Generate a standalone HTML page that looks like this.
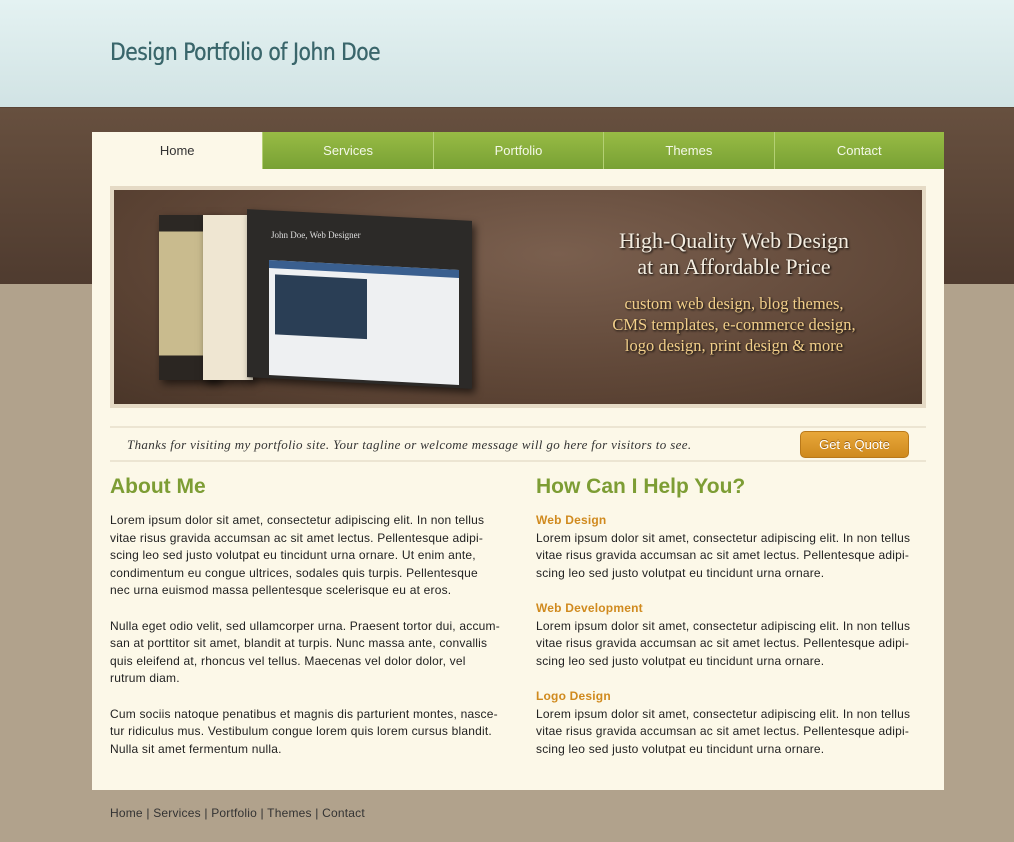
<!DOCTYPE html>
<html><head><meta charset="utf-8"><style>
*{margin:0;padding:0;box-sizing:border-box}
body{width:1014px;height:842px;position:relative;overflow:hidden;font-family:"Liberation Sans",sans-serif;background:#b1a28c}
#hdr{position:absolute;left:0;top:0;width:1014px;height:107px;background:linear-gradient(#e4f2f2,#d1e3e4)}
#hdr h1{position:absolute;left:110px;top:38px;font-family:"DejaVu Sans Condensed","Liberation Sans Narrow",sans-serif;font-weight:normal;font-size:24px;color:#3a666b;letter-spacing:-0.4px;transform:scaleX(0.93);transform-origin:left;text-shadow:0.4px 0 0 #3a666b}
#band{position:absolute;left:0;top:107px;width:1014px;height:177px;background:linear-gradient(#67503f,#4f3b2f);border-top:1px solid #5a4536}
#box{position:absolute;left:92px;top:132px;width:852px;height:658px;background:#fcf8e8}
#nav{position:absolute;left:0;top:0;width:852px;height:37px;display:flex}
#nav div{width:170.4px;height:37px;line-height:37px;text-align:center;font-size:13px;color:#f4f8e8;background:linear-gradient(#98bb45,#78a134);border-left:1px solid #b4d074}
#nav div.on{background:#fcf8e8;color:#333;border-left:none}
#ban{position:absolute;left:18px;top:54px;width:816px;height:222px;background:#e5dac5;padding:4px}
#bi{width:100%;height:100%;background:radial-gradient(ellipse at 55% 30%,#7a5f4e,#5a4233 70%,#4a3629);position:relative;overflow:hidden}
.sc{position:absolute;box-shadow:3px 4px 8px rgba(0,0,0,.6)}
#bt{position:absolute;left:460px;top:38px;width:320px;text-align:center;font-family:"Liberation Serif",serif;color:#f3ecdf;font-size:22px;line-height:26px;text-shadow:1px 1px 2px #000}
#bs{position:absolute;left:460px;top:103px;width:320px;text-align:center;font-family:"Liberation Serif",serif;color:#f2cf8a;font-size:16.5px;line-height:21px;text-shadow:1px 1px 2px #000}
#tag{position:absolute;left:18px;top:294px;width:816px;height:36px;border-top:2px solid #ece5d2;border-bottom:2px solid #ece5d2}
#tag p{position:absolute;left:17px;top:9px;font-family:"Liberation Serif",serif;font-style:italic;font-size:13px;color:#333;letter-spacing:0.35px}
#q{position:absolute;left:690px;top:3px;width:109px;height:27px;border-radius:5px;background:linear-gradient(#e8a73a,#cf8a1e);border:1px solid #b9791a;color:#fff;font-size:13px;text-align:center;line-height:25px;text-shadow:0 -1px 0 #9a6010}
h2{position:absolute;font-size:21px;color:#7d9d34;font-weight:bold}
.t{position:absolute;font-size:12px;line-height:17.6px;color:#222;letter-spacing:0.2px;white-space:nowrap}
.t p{margin-bottom:17.6px}
h3{font-size:12px;color:#d08a1e;font-weight:bold}
#ft{position:absolute;left:110px;top:806px;font-size:12px;color:#333;letter-spacing:0.2px}
</style></head><body>
<div id="hdr"><h1>Design Portfolio of John Doe</h1></div>
<div id="band"></div>
<div id="box">
<div id="nav"><div class="on">Home</div><div>Services</div><div>Portfolio</div><div>Themes</div><div>Contact</div></div>
<div id="ban"><div id="bi">
<div class="sc" style="left:45px;top:25px;width:60px;height:165px;background:linear-gradient(#2c2824 0 10%,#c9bb8e 10% 85%,#2b2622 85%)"></div>
<div class="sc" style="left:89px;top:25px;width:50px;height:165px;background:#efe6d2"></div>
<div class="sc" style="left:133px;top:25px;width:225px;height:168px;background:#2c2a28;transform:skewY(3deg)"></div>
<div style="position:absolute;left:155px;top:75px;width:190px;height:115px;background:#eef0f2;transform:skewY(3deg)"><div style="height:8px;background:#3a5f8f"></div><div style="margin:6px;width:92px;height:60px;background:#2a3e55"></div></div>
<div style="position:absolute;left:157px;top:40px;color:#ddd;font-family:'Liberation Serif',serif;font-size:9px">John Doe, Web Designer</div>
<div id="bt">High-Quality Web Design<br>at an Affordable Price</div>
<div id="bs">custom web design, blog themes,<br>CMS templates, e-commerce design,<br>logo design, print design &amp; more</div>
</div></div>
<div id="tag"><p>Thanks for visiting my portfolio site. Your tagline or welcome message will go here for visitors to see.</p><div id="q">Get a Quote</div></div>
<h2 style="left:18px;top:343px">About Me</h2>
<h2 style="left:444px;top:343px">How Can I Help You?</h2>
<div class="t" style="left:18px;top:380px">
<p>Lorem ipsum dolor sit amet, consectetur adipiscing elit. In non tellus<br>vitae risus gravida accumsan ac sit amet lectus. Pellentesque adipi-<br>scing leo sed justo volutpat eu tincidunt urna ornare. Ut enim ante,<br>condimentum eu congue ultrices, sodales quis turpis. Pellentesque<br>nec urna euismod massa pellentesque scelerisque eu at eros.</p>
<p>Nulla eget odio velit, sed ullamcorper urna. Praesent tortor dui, accum-<br>san at porttitor sit amet, blandit at turpis. Nunc massa ante, convallis<br>quis eleifend at, rhoncus vel tellus. Maecenas vel dolor dolor, vel<br>rutrum diam.</p>
<p>Cum sociis natoque penatibus et magnis dis parturient montes, nasce-<br>tur ridiculus mus. Vestibulum congue lorem quis lorem cursus blandit.<br>Nulla sit amet fermentum nulla.</p>
</div>
<div class="t" style="left:444px;top:380px">
<h3>Web Design</h3><p>Lorem ipsum dolor sit amet, consectetur adipiscing elit. In non tellus<br>vitae risus gravida accumsan ac sit amet lectus. Pellentesque adipi-<br>scing leo sed justo volutpat eu tincidunt urna ornare.</p>
<h3>Web Development</h3><p>Lorem ipsum dolor sit amet, consectetur adipiscing elit. In non tellus<br>vitae risus gravida accumsan ac sit amet lectus. Pellentesque adipi-<br>scing leo sed justo volutpat eu tincidunt urna ornare.</p>
<h3>Logo Design</h3><p>Lorem ipsum dolor sit amet, consectetur adipiscing elit. In non tellus<br>vitae risus gravida accumsan ac sit amet lectus. Pellentesque adipi-<br>scing leo sed justo volutpat eu tincidunt urna ornare.</p>
</div>
</div>
<div id="ft">Home | Services | Portfolio | Themes | Contact</div>
</body></html>
